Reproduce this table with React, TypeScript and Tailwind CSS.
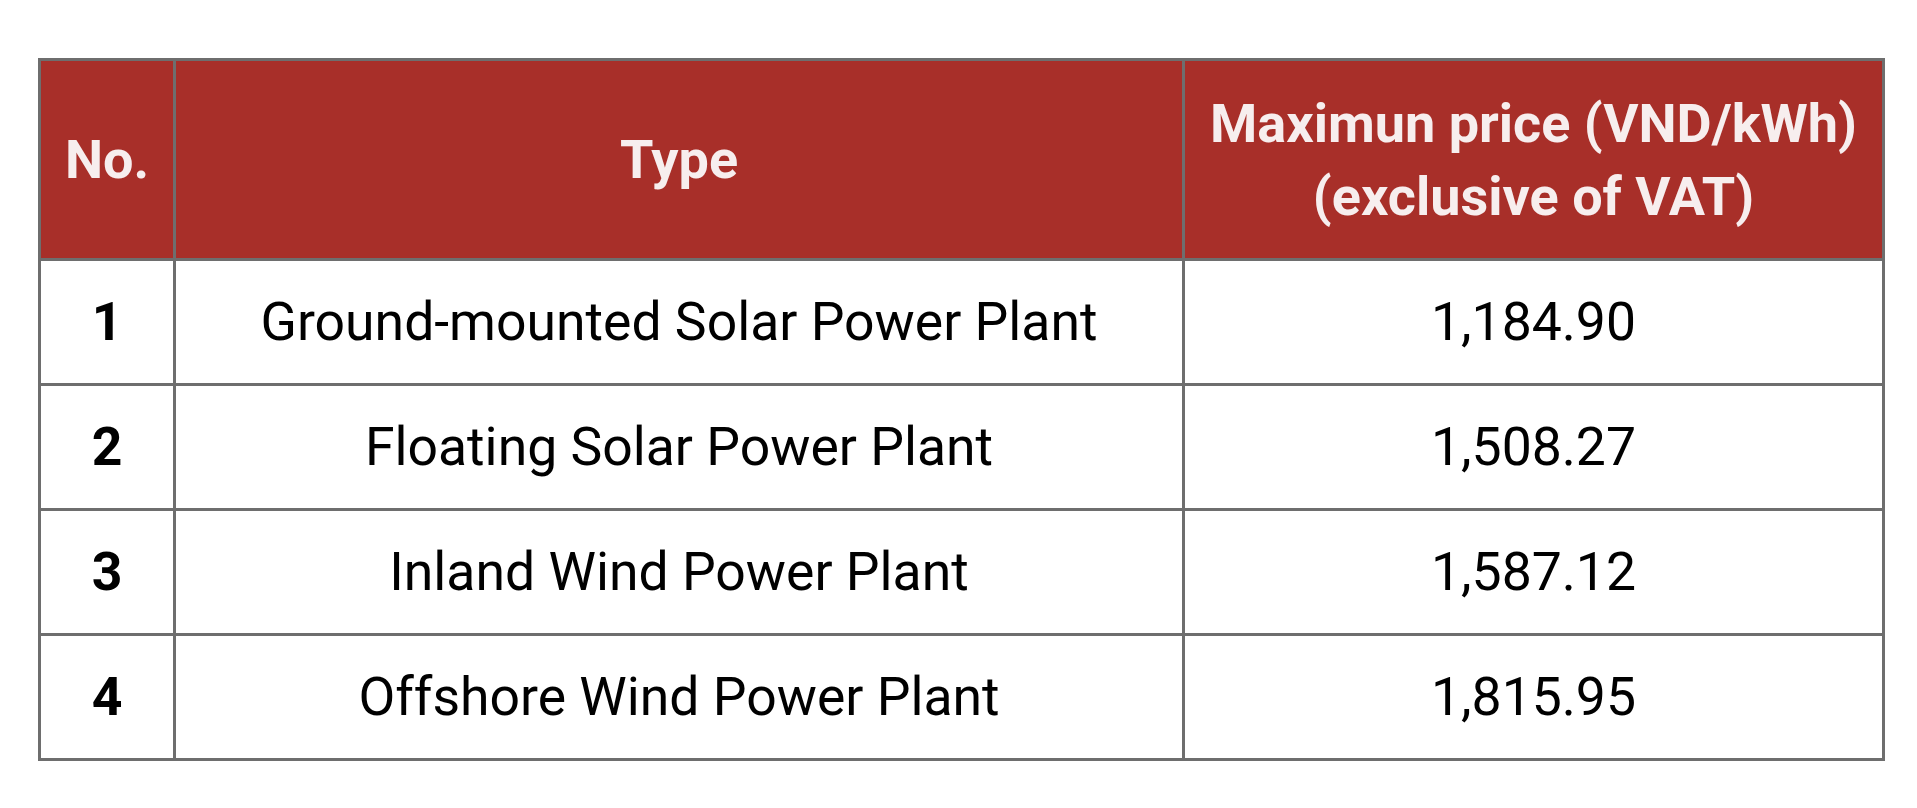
import React from 'react';

const rows = [
  { no: 1, type: 'Ground-mounted Solar Power Plant', price: '1,184.90' },
  { no: 2, type: 'Floating Solar Power Plant', price: '1,508.27' },
  { no: 3, type: 'Inland Wind Power Plant', price: '1,587.12' },
  { no: 4, type: 'Offshore Wind Power Plant', price: '1,815.95' },
];

const App: React.FC = () => (
  <div className="w-[1917px] h-[808px] bg-white pt-[58px] pl-[38px] font-['Roboto',sans-serif]">
    <table className="w-[1844px] table-fixed border-collapse border-[3px] border-[#6e6e6e]">
      <colgroup>
        <col className="w-[135px]" />
        <col className="w-[1009px]" />
        <col className="w-[700px]" />
      </colgroup>
      <thead>
        <tr className="h-[200px] bg-[#a82f29] text-[#f7eeee] text-[54px] font-bold leading-[73px]">
          <th className="border-[3px] border-[#6e6e6e] text-center">No.</th>
          <th className="border-[3px] border-[#6e6e6e] text-center">Type</th>
          <th className="border-[3px] border-[#6e6e6e] text-center">
            Maximun price (VND/kWh)
            <br />
            (exclusive of VAT)
          </th>
        </tr>
      </thead>
      <tbody className="text-[53.5px] text-black">
        {rows.map((r) => (
          <tr key={r.no} className="h-[125px]">
            <td className="border-[3px] border-[#6e6e6e] text-center font-bold">{r.no}</td>
            <td className="border-[3px] border-[#6e6e6e] text-center">{r.type}</td>
            <td className="border-[3px] border-[#6e6e6e] text-center">{r.price}</td>
          </tr>
        ))}
      </tbody>
    </table>
  </div>
);

export default App;
